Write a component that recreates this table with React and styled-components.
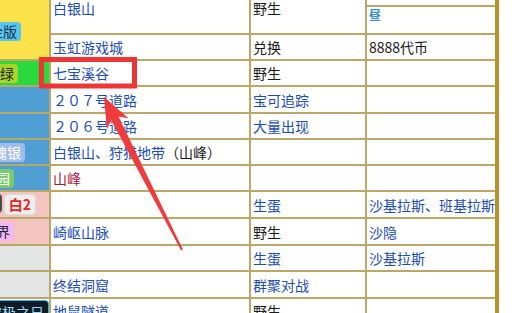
import React from "react";
import styled, { createGlobalStyle } from "styled-components";

const GlobalStyle = createGlobalStyle`
  html, body {
    margin: 0;
    padding: 0;
    background: #fff;
  }
  body {
    font-family: "Noto Sans CJK SC", "Noto Sans", sans-serif;
  }
`;

const tones = {
  link: "#1b4db3",
  plain: "#1a1a1a",
  red: "#a5173b",
};

const Page = styled.div`
  position: relative;
  width: 532px;
  height: 313px;
  overflow: hidden;
  background: #fff;
`;

const Table = styled.div`
  display: grid;
  grid-template-columns: 49px 198px 114px 128px;
  grid-template-rows: 23px 26px 24px 24px 25px 24px 24px 24px 25px 25px 24px 25px 24px;
  gap: 2px;
  width: max-content;
  margin-top: -18px;
  background: #bba767;
  border-right: 4px solid #b8922a;
  font-size: 14px;
`;

const Cell = styled.div`
  grid-row: span ${(p) => p.$span || 1};
  display: flex;
  align-items: center;
  padding: 0 2px;
  background: #fff;
  color: ${(p) => tones[p.$tone || "link"]};
  white-space: nowrap;
  overflow: hidden;
`;

const TopCell = styled(Cell)`
  align-items: flex-start;
  padding-top: 1px;
`;

const Side = styled.div`
  grid-row: span ${(p) => p.$span || 1};
  display: flex;
  justify-content: flex-end;
  align-items: ${(p) => p.$align || "center"};
  gap: 2px;
  padding-right: ${(p) => p.$right || 0}px;
  padding-bottom: ${(p) => p.$bottom || 0}px;
  padding-top: ${(p) => p.$top || 0}px;
  background: ${(p) => p.$bg};
  overflow: hidden;
  white-space: nowrap;
`;

const Badge = styled.span`
  flex-shrink: 0;
  height: ${(p) => p.$h || 19}px;
  line-height: ${(p) => p.$h || 19}px;
  padding: 0 4px;
  border-radius: 4px;
  background: ${(p) => p.$bg};
  color: ${(p) => p.$fg};
  font-weight: ${(p) => (p.$bold ? 700 : 400)};
  border: ${(p) => (p.$ring ? `1px solid ${p.$ring}` : "none")};
`;

const Tag = styled.span`
  font-size: 12px;
  font-weight: 700;
  line-height: 14px;
  color: #3d8ec9;
`;

const Part = styled.span`
  color: ${(p) => tones[p.$tone]};
`;

const Overlay = styled.svg`
  position: absolute;
  left: 0;
  top: 0;
  pointer-events: none;
`;

function Annotation() {
  return (
    <Overlay width="532" height="313" viewBox="0 0 532 313">
      <rect
        x="41.5"
        y="59.5"
        width="93"
        height="26.5"
        fill="none"
        stroke="#ee3535"
        strokeWidth="5"
      />
      <polygon
        points="104,97 128.5,118.3 118.5,116.6 182.9,249.5 181.1,250.5 111.3,120.2 106.9,129.2"
        fill="#ef3b3b"
      />
    </Overlay>
  );
}

export default function App() {
  return (
    <Page>
      <GlobalStyle />
      <Table>
        <Side $span={3} $bg="#fbe14a" $align="flex-end" $bottom={18} $right={28}>
          <Badge $bg="#55c6ef" $fg="#1d2f4f">白金版</Badge>
        </Side>
        <Cell $span={2}>白银山</Cell>
        <Cell $span={2} $tone="plain">野生</Cell>
        <Cell />
        <TopCell>
          <Tag>昼</Tag>
        </TopCell>

        <Cell>玉虹游戏城</Cell>
        <Cell $tone="plain">兑换</Cell>
        <Cell $tone="plain">8888代币</Cell>

        <Side $bg="#29d93e" $right={31}>
          <Badge $bg="#a8d42c" $fg="#2a2a10">叶绿</Badge>
        </Side>
        <Cell>七宝溪谷</Cell>
        <Cell $tone="plain">野生</Cell>
        <Cell />

        <Side $bg="#509fd4" />
        <Cell>２０７号道路</Cell>
        <Cell>宝可追踪</Cell>
        <Cell />

        <Side $bg="#509fd4" />
        <Cell>２０６号道路</Cell>
        <Cell>大量出现</Cell>
        <Cell />

        <Side $bg="#509fd4" $right={24}>
          <Badge $bg="#9fbde8" $fg="#fff">魂银</Badge>
        </Side>
        <Cell>
          白银山、狩猎地带<Part $tone="plain">（山峰）</Part>
        </Cell>
        <Cell />
        <Cell />

        <Side $bg="#509fd4" $right={35}>
          <Badge $bg="#7acb6c" $fg="#fff">乐园</Badge>
        </Side>
        <Cell $tone="red">山峰</Cell>
        <Cell />
        <Cell />

        <Side $bg="#f3c4c0" $right={13} $align="flex-start" $top={2}>
          <Badge $bg="#4a4a4a" $fg="#fff" $bold>黑2</Badge>
          <Badge $bg="#eeeeee" $fg="#e8231d" $ring="#dcdcdc" $bold>白2</Badge>
        </Side>
        <Cell />
        <Cell>生蛋</Cell>
        <Cell>沙基拉斯、班基拉斯</Cell>

        <Side $bg="#f3c4c0" $right={35}>
          <Badge $bg="#f6b6f2" $fg="#22264a">世界</Badge>
        </Side>
        <Cell>崎岖山脉</Cell>
        <Cell $tone="plain">野生</Cell>
        <Cell>沙隐</Cell>

        <Side $bg="#e2e6e5" />
        <Cell />
        <Cell>生蛋</Cell>
        <Cell>沙基拉斯</Cell>

        <Side $bg="#e2e6e5" />
        <Cell>终结洞窟</Cell>
        <Cell>群聚对战</Cell>
        <Cell />

        <Side $bg="#fff" $align="flex-start" $top={1}>
          <Badge $bg="#111c2a" $fg="#9fdcf2" $ring="#2fb4e0" $h={22}>究极之日</Badge>
        </Side>
        <Cell>地鼠隧道</Cell>
        <Cell $tone="plain">野生</Cell>
        <Cell />
      </Table>
      <Annotation />
    </Page>
  );
}
